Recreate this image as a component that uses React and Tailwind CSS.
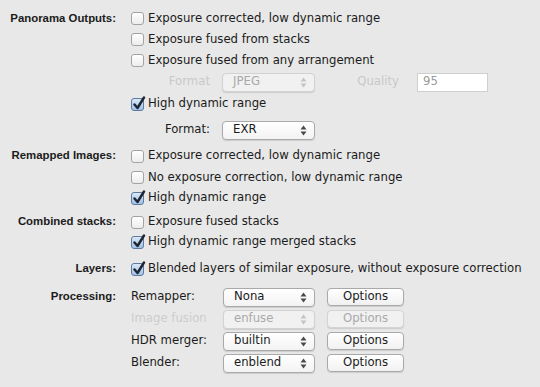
import React from "react";

const Check = ({ checked }) => (
  <span
    className={
      "relative w-[13px] h-[13px] shrink-0 rounded-[3px] border " +
      (checked
        ? "border-[#5f7a9c] bg-gradient-to-b from-[#d9e8f8] to-[#9fc1e8]"
        : "border-[#a3a3a3] bg-gradient-to-b from-white to-[#ececec]")
    }
  >
    {checked && (
      <svg className="absolute left-[0px] top-[-3px]" width="14" height="15" viewBox="0 0 14 15">
        <path d="M2.5 8.5 L5.5 12 L12 1.5" fill="none" stroke="#1c2530" strokeWidth="2.4" strokeLinecap="round" strokeLinejoin="round" />
      </svg>
    )}
  </span>
);

const CheckRow = ({ checked, children, h = "h-[21px]" }) => (
  <div className={"flex items-center gap-[4px] " + h}>
    <Check checked={checked} />
    <span className="text-[11.7px] text-[#1b1b1b] whitespace-nowrap">{children}</span>
  </div>
);

const Arrows = ({ disabled }) => (
  <svg width="7" height="11" viewBox="0 0 7 11" className="shrink-0">
    <path d="M3.5 0.5 L6.5 4.5 L0.5 4.5 Z" fill={disabled ? "#c4c4c4" : "#4a4a4a"} />
    <path d="M3.5 10.5 L6.5 6.5 L0.5 6.5 Z" fill={disabled ? "#c4c4c4" : "#4a4a4a"} />
  </svg>
);

const Select = ({ value, disabled, w = "w-[93px]" }) => (
  <div
    className={
      "flex items-center justify-between h-[19px] pl-[10px] pr-[7px] rounded-[4px] border shadow-[0_1px_1px_rgba(0,0,0,0.12)] " +
      w +
      (disabled
        ? " border-[#d2d2d2] bg-[#f1f1f1] text-[#a9a9a9]"
        : " border-[#a9a9a9] bg-gradient-to-b from-white to-[#f3f3f3] text-[#1b1b1b]")
    }
  >
    <span className="text-[11.7px] leading-none">{value}</span>
    <Arrows disabled={disabled} />
  </div>
);

const OptionsBtn = ({ disabled }) => (
  <div
    className={
      "flex items-center justify-center w-[77px] h-[18px] rounded-[4px] border text-[11.7px] leading-none shadow-[0_1px_1px_rgba(0,0,0,0.12)] " +
      (disabled
        ? "border-[#d4d4d4] bg-[#f1f1f1] text-[#a9a9a9]"
        : "border-[#a9a9a9] bg-gradient-to-b from-white to-[#f1f1f1] text-[#1b1b1b]")
    }
  >
    Options
  </div>
);

const Section = ({ label, labelH = "h-[21px]", className = "", children }) => (
  <div className={"flex " + className}>
    <div
      className={"w-[116px] shrink-0 flex items-center justify-end text-[11.4px] font-bold text-[#1b1b1b] whitespace-nowrap " + labelH}
      style={{ fontFamily: '"Liberation Sans", Arial, sans-serif' }}
    >
      {label}
    </div>
    <div className="ml-[15px] flex flex-col">{children}</div>
  </div>
);

const ProcRow = ({ label, value, disabled }) => (
  <div className="flex items-center h-[22px]">
    <span className={"w-[92px] text-[11.7px] whitespace-nowrap " + (disabled ? "text-[#cdcdcd]" : "text-[#1b1b1b]")}>
      {label}
    </span>
    <Select value={value} disabled={disabled} w="w-[92px]" />
    <div className="ml-[12px]">
      <OptionsBtn disabled={disabled} />
    </div>
  </div>
);

export default function App() {
  return (
    <div
      className="w-[540px] h-[387px] bg-[#e8e8e8] pt-[8px] overflow-hidden"
      style={{ fontFamily: '"DejaVu Sans", "Liberation Sans", sans-serif' }}
    >
      <Section label="Panorama Outputs:">
        <CheckRow>Exposure corrected, low dynamic range</CheckRow>
        <CheckRow>Exposure fused from stacks</CheckRow>
        <CheckRow>Exposure fused from any arrangement</CheckRow>
        <div className="flex items-center h-[22px]">
          <span className="w-[79px] text-right text-[11.7px] text-[#c9c9c9]">Format</span>
          <div className="ml-[12px]">
            <Select value="JPEG" disabled />
          </div>
          <span className="w-[84px] text-right text-[11.7px] text-[#c9c9c9]">Quality</span>
          <div className="ml-[18px] w-[71px] h-[19px] bg-white border border-[#cfcfcf] flex items-center pl-[5px] text-[11.7px] text-[#9a9a9a]">
            95
          </div>
        </div>
        <CheckRow checked h="h-[22px]">High dynamic range</CheckRow>
        <div className="flex items-center h-[30px]">
          <span className="w-[79px] text-right text-[11.7px] text-[#1b1b1b]">Format:</span>
          <div className="ml-[12px]">
            <Select value="EXR" />
          </div>
        </div>
      </Section>

      <Section label="Remapped Images:" labelH="h-[22px]">
        <CheckRow h="h-[22px]">Exposure corrected, low dynamic range</CheckRow>
        <CheckRow>No exposure correction, low dynamic range</CheckRow>
        <CheckRow checked h="h-[20px]">High dynamic range</CheckRow>
      </Section>

      <Section label="Combined stacks:" labelH="h-[20px]" className="mt-[4px]">
        <CheckRow h="h-[20px]">Exposure fused stacks</CheckRow>
        <CheckRow checked h="h-[20px]">High dynamic range merged stacks</CheckRow>
      </Section>

      <Section label="Layers:" labelH="h-[20px]" className="mt-[7px]">
        <CheckRow checked h="h-[20px]">Blended layers of similar exposure, without exposure correction</CheckRow>
      </Section>

      <Section label="Processing:" labelH="h-[22px]" className="mt-[7px]">
        <ProcRow label="Remapper:" value="Nona" />
        <ProcRow label="Image fusion" value="enfuse" disabled />
        <ProcRow label="HDR merger:" value="builtin" />
        <ProcRow label="Blender:" value="enblend" />
      </Section>
    </div>
  );
}
